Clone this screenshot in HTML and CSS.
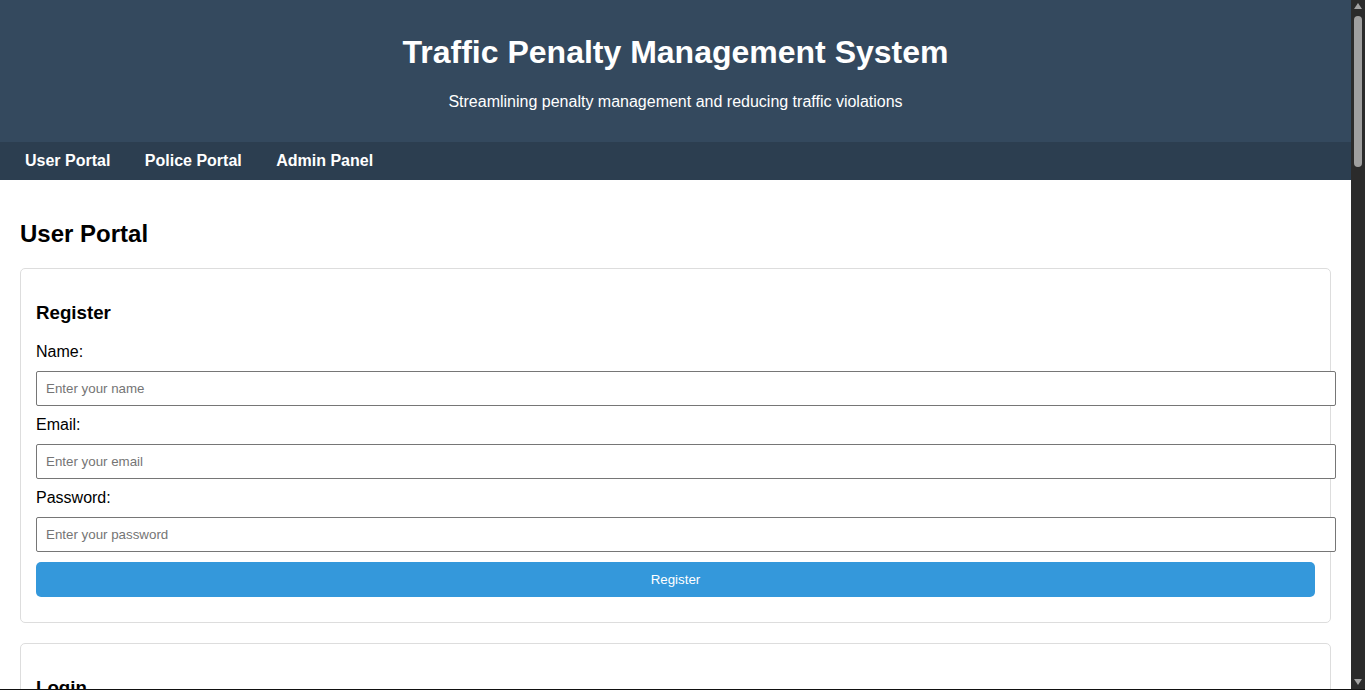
FILE: index.html
```html
<!DOCTYPE html>
<html lang="en">
<head>
<meta charset="utf-8">
<title>Traffic Penalty Management System</title>
<link rel="stylesheet" href="styles.css">
</head>
<body>
<div class="page">
  <header class="site-header">
    <h1>Traffic Penalty Management System</h1>
    <p>Streamlining penalty management and reducing traffic violations</p>
  </header>
  <nav class="site-nav">
    <a href="#">User Portal</a>
    <a href="#">Police Portal</a>
    <a href="#">Admin Panel</a>
  </nav>
  <main class="content">
    <h2>User Portal</h2>
    <section class="card">
      <h3>Register</h3>
      <label>Name:</label>
      <input type="text" placeholder="Enter your name">
      <label>Email:</label>
      <input type="email" placeholder="Enter your email">
      <label>Password:</label>
      <input type="password" placeholder="Enter your password">
      <button class="btn">Register</button>
    </section>
    <section class="card">
      <h3>Login</h3>
      <label>Email:</label>
      <input type="email" placeholder="Enter your email">
      <label>Password:</label>
      <input type="password" placeholder="Enter your password">
      <button class="btn">Login</button>
    </section>
  </main>
</div>
<div class="fake-scrollbar" aria-hidden="true">
  <span class="sb-arrow sb-up"></span>
  <span class="sb-thumb"></span>
  <span class="sb-arrow sb-down"></span>
</div>
<div class="window-edge" aria-hidden="true"></div>
</body>
</html>
```
FILE: styles.css
```css
html, body {
  margin: 0;
  padding: 0;
}
body {
  font-family: "Liberation Sans", Arial, sans-serif;
  color: #000;
  background: #fff;
  padding-right: 14px;
}
.site-header {
  background: #34495e;
  color: #fff;
  text-align: center;
  padding: 13px 0 15px;
}
.site-header h1 {
  font-size: 32px;
  margin: 21px 0 22px;
}
.site-header p {
  font-size: 16px;
  margin: 16px 0;
}
.site-nav {
  background: #2c3e50;
  padding: 10px;
}
.site-nav a {
  color: #fff;
  text-decoration: none;
  font-weight: bold;
  font-size: 16px;
  padding: 0 15px;
}
.content {
  padding: 20px;
}
.content h2 {
  font-size: 24px;
  margin: 20px 0;
}
.card {
  border: 1px solid #ddd;
  border-radius: 5px;
  padding: 15px;
  margin-bottom: 20px;
}
.card h3 {
  font-size: 18.72px;
  margin: 18px 0 19px;
}
.card label {
  display: block;
  font-size: 16px;
}
.card input {
  display: block;
  width: 100%;
  margin: 10px 0;
  padding: 9px 10px 9px 9px;
  border: 1px solid #767676;
  border-radius: 2px;
  font-family: "Liberation Sans", Arial, sans-serif;
  font-size: 13.333px;
  color: #000;
  background: #fff;
}
.card input::placeholder {
  color: #757575;
}
.btn {
  display: block;
  width: 100%;
  margin: 10px 0;
  padding: 10px;
  border: none;
  border-radius: 5px;
  background: #3498db;
  color: #fff;
  font-family: "Liberation Sans", Arial, sans-serif;
  font-size: 13.333px;
  cursor: pointer;
}
.fake-scrollbar {
  position: fixed;
  top: 0;
  right: 0;
  width: 14px;
  height: 100%;
  background: #2b2b2b;
}
.sb-thumb {
  position: absolute;
  left: 3px;
  top: 16px;
  width: 8px;
  height: 151px;
  border-radius: 4px;
  background: #9f9f9f;
}
.sb-arrow {
  position: absolute;
  left: 2.5px;
  width: 0;
  height: 0;
  border-left: 4.5px solid transparent;
  border-right: 4.5px solid transparent;
}
.sb-up {
  top: 3px;
  border-bottom: 6px solid #a3a3a3;
}
.sb-down {
  bottom: 5px;
  border-top: 6px solid #a3a3a3;
}
.window-edge {
  position: fixed;
  left: 0;
  right: 0;
  bottom: 0;
  height: 1px;
  background: #111;
}
```
